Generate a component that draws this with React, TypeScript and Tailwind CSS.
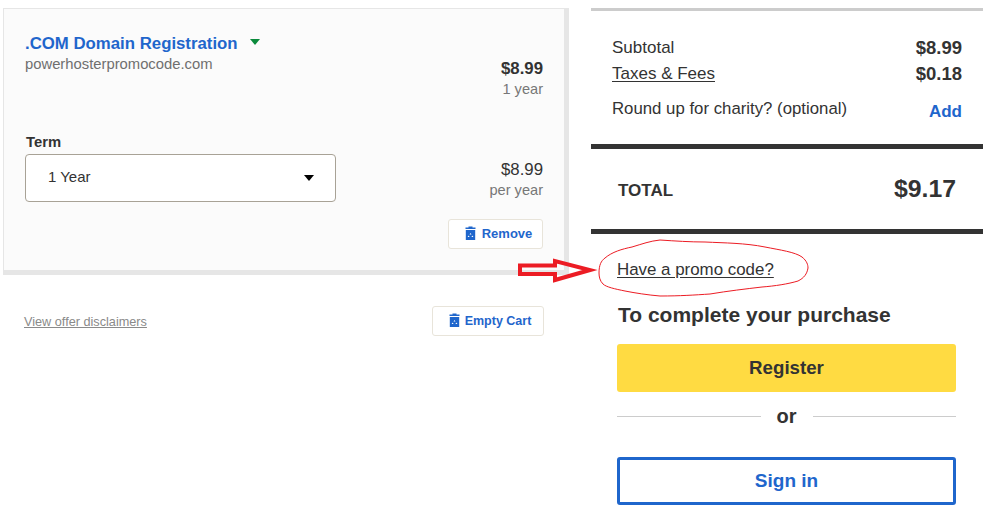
function TrashIcon() {
  return (
    <svg width="11" height="14" viewBox="0 0 11 14" className="shrink-0 -mt-[2px]">
      <path d="M3.5 0.5h4v1h3v1.5h-10v-1.5h3z" fill="#1f66cc" />
      <path d="M0.8 4h9.4v10h-9.4z" fill="#1f66cc" />
      <path d="M5.5 7l1 1.6h-2zM3.6 9.6l1 1.5h-2zM7.4 9.6l1 1.5h-2z" fill="#ffffff" />
    </svg>
  );
}

function Annotation() {
  return (
    <svg width="1001" height="511" className="absolute top-0 left-0 pointer-events-none">
      <path
        d="M599 273 C599 265 601 261 605 258 C612 252 622 249 632 247 C642 244 650 241 660 240 C675 241 690 242 705 242 C725 243 745 243 765 247 C780 250 795 252 802 257 C807 261 808 265 808 268 C807 274 804 278 798 281 C788 284 775 286 762 287 C745 289 728 291 710 294 C695 295 680 296 660 296 C648 295 635 293 625 291 C615 289 606 287 603 284 C600 281 599 277 599 273 Z"
        fill="none"
        stroke="#ec1c24"
        strokeWidth="1"
      />
      <path
        d="M520 265.5 H555 V261 L590 270 L555 280 V274 H520 Z"
        fill="none"
        stroke="#ec1c24"
        strokeWidth="4"
      />
    </svg>
  );
}

function SummaryRow({ label, value, link }: { label: string; value: string; link?: boolean }) {
  return (
    <div className="flex justify-between items-center h-[26px]">
      <span className={link ? "text-[17px] underline underline-offset-2" : "text-[17px]"}>{label}</span>
      <span className="text-[18.5px] font-bold">{value}</span>
    </div>
  );
}

export default function App() {
  return (
    <div
      className="relative w-[1001px] h-[511px] overflow-hidden bg-white text-[#333333] flex pt-2 pl-[3px] gap-[22px]"
      style={{ fontFamily: '"Liberation Sans", Arial, sans-serif' }}
    >
      {/* Left - cart */}
      <div className="w-[566px] shrink-0">
        <div className="h-[267px] bg-[#fbfbfb] border border-[#e6e6e6] border-r-[5px] border-b-[5px] pl-[21px] pr-[21px] pt-[25px]">
          <div className="flex justify-between">
            <div>
              <div className="flex items-center gap-[12px] text-[16.8px] leading-[20px] font-bold text-[#1f66cc]">
                .COM Domain Registration
                <span className="w-0 h-0 -mt-[5px] border-x-[5.5px] border-x-transparent border-t-[6px] border-t-[#0b8a3c]" />
              </div>
              <div className="text-[14.8px] leading-[20px] text-[#6f6f6f]">powerhosterpromocode.com</div>
            </div>
            <div className="text-right mt-[25px]">
              <div className="text-[16.8px] leading-[20px] font-bold">$8.99</div>
              <div className="text-[14.6px] leading-[20px] text-[#777777]">1 year</div>
            </div>
          </div>

          <div className="flex justify-between mt-[13px]">
            <div>
              <div className="ml-px text-[14.8px] leading-[20px] font-bold text-[#333333] mt-[20px]">Term</div>
              <div className="w-[311px] h-[48px] mt-[2px] bg-white border border-[#a8a296] rounded-[4px] flex items-center justify-between pl-[22px] pr-[21px] text-[15px]">
                <span className="-mt-[2px]">1 Year</span>
                <span className="w-0 h-0 border-x-[5.5px] border-x-transparent border-t-[6px] border-t-black" />
              </div>
            </div>
            <div className="text-right mt-[48px]">
              <div className="text-[16.8px] leading-[20px]">$8.99</div>
              <div className="text-[14.6px] leading-[20px] text-[#777777]">per year</div>
            </div>
          </div>

          <div className="flex justify-end mt-[17px]">
            <button className="w-[95px] h-[30px] pl-[6px] bg-white border border-[#e8e4da] rounded-[3px] flex items-center justify-center gap-[6px] text-[13px] font-bold text-[#1f66cc]">
              <TrashIcon />
              Remove
            </button>
          </div>
        </div>

        <div className="flex justify-between items-center mt-[31px] pl-[21px] pr-[25px]">
          <a className="mt-[3px] text-[12.7px] text-[#8a8a8a] underline">View offer disclaimers</a>
          <button className="w-[112px] h-[30px] pl-[4px] bg-white border border-[#e8e4da] rounded-[3px] flex items-center justify-center gap-[5px] text-[12.5px] font-bold text-[#1f66cc]">
            <TrashIcon />
            Empty Cart
          </button>
        </div>
      </div>

      {/* Right - order summary */}
      <div className="w-[392px] shrink-0">
        <div className="h-[3px] bg-[#cccccc]" />
        <div className="pl-[21px] pr-[21px] pt-[24px] h-[133px]">
          <SummaryRow label="Subtotal" value="$8.99" />
          <SummaryRow label="Taxes & Fees" value="$0.18" link />
          <div className="flex justify-between mt-[9px]">
            <span className="text-[16.8px]">Round up for charity? (optional)</span>
            <span className="text-[17px] font-bold text-[#1f66cc] mt-[3px]">Add</span>
          </div>
        </div>
        <div className="h-[5px] bg-[#333333]" />
        <div className="h-[80px] pl-[27px] pr-[27px] flex justify-between items-center">
          <span className="text-[17px] font-bold mt-[4px]">TOTAL</span>
          <span className="text-[24.8px] font-bold">$9.17</span>
        </div>
        <div className="h-[5px] bg-[#333333]" />
        <div className="pl-[26px] pr-[27px]">
          <a className="block mt-[25px] text-[16.9px] leading-[22px] underline underline-offset-2">Have a promo code?</a>
          <div className="ml-px mt-[22px] text-[21px] leading-[24px] font-bold">To complete your purchase</div>
          <button className="w-full h-[48px] mt-[17px] bg-[#ffdb42] rounded-[3px] text-[18.7px] font-bold">Register</button>
          <div className="flex items-center h-[24px] mt-[12px] text-[20px] font-bold">
            <div className="flex-1 h-px bg-[#cccccc]" />
            <span className="px-[16px]">or</span>
            <div className="flex-1 h-px bg-[#cccccc]" />
          </div>
          <button className="w-full h-[48px] mt-[29px] bg-white border-[3px] border-[#1f66cc] rounded-[3px] text-[19px] font-bold text-[#1f66cc]">Sign in</button>
        </div>
      </div>

      <Annotation />
    </div>
  );
}
